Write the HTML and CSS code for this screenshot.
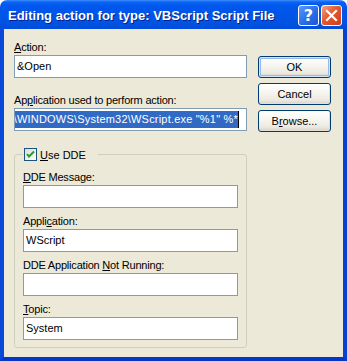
FILE: index.html
```html
<!DOCTYPE html>
<html lang="en">
<head>
    <meta charset="UTF-8">
    <title>Editing action for type: VBScript Script File</title>
    <link rel="stylesheet" href="styles.css">
</head>
<body>
    <div class="window">
        <!-- Title bar -->
        <div class="titlebar">
            <span class="title">Editing action for type: VBScript Script File</span>
            <div class="caption-buttons">
                <span class="cap-btn cap-help">?</span>
                <span class="cap-btn cap-close">
                    <svg viewBox="0 0 19 19" width="19" height="19">
                        <path d="M5 5 L14 14 M14 5 L5 14" stroke="#fff" stroke-width="2.2" stroke-linecap="square"></path>
                    </svg>
                </span>
            </div>
        </div>

        <!-- Dialog body -->
        <div class="frame">
            <div class="main-col">
                <div class="field">
                    <div class="label"><u>A</u>ction:</div>
                    <div class="edit">&amp;Open</div>
                </div>
                <div class="field">
                    <div class="label">Ap<u>p</u>lication used to perform action:</div>
                    <div class="edit edit-path"><span class="sel">\WINDOWS\System32\WScript.exe "%1" %*</span><span class="caret"></span></div>
                </div>

                <fieldset class="group">
                    <legend class="group-title">
                        <span class="check">
                            <svg viewBox="0 0 11 11" width="11" height="11">
                                <path d="M2 5 L4 7.5 L9 2.5" fill="none" stroke="#21A121" stroke-width="2"></path>
                            </svg>
                        </span>
                        <span><u>U</u>se DDE</span>
                    </legend>
                    <div class="gfield">
                        <div class="label"><u>D</u>DE Message:</div>
                        <div class="edit"></div>
                    </div>
                    <div class="gfield">
                        <div class="label">Appli<u>c</u>ation:</div>
                        <div class="edit">WScript</div>
                    </div>
                    <div class="gfield">
                        <div class="label">DDE Application <u>N</u>ot Running:</div>
                        <div class="edit"></div>
                    </div>
                    <div class="gfield">
                        <div class="label"><u>T</u>opic:</div>
                        <div class="edit">System</div>
                    </div>
                </fieldset>
            </div>

            <div class="buttons">
                <button class="btn btn-default">OK</button>
                <button class="btn">Cancel</button>
                <button class="btn">B<u>r</u>owse...</button>
            </div>
        </div>
    </div>
</body>
</html>
```

FILE: styles.css
```css
* {
    margin: 0;
    padding: 0;
    box-sizing: border-box;
}

body {
    font-family: "Liberation Sans", Arial, sans-serif;
    font-size: 11px;
    color: #000;
    background: #fff;
}

u {
    text-decoration: underline;
    text-underline-offset: 1px;
}

.window {
    width: 347px;
    height: 361px;
    display: flex;
    flex-direction: column;
}

/* Title bar */
.titlebar {
    height: 29px;
    flex: none;
    display: flex;
    align-items: center;
    padding: 2px 5px 0 8px;
    border-radius: 7px 7px 0 0;
    background: linear-gradient(#3d8ffd 0, #0d63f2 2px, #0058ee 5px, #0055e8 14px, #0053e4 22px, #004cd8 29px);
}

.title {
    flex: 1;
    color: #fff;
    font-family: "Liberation Sans", Arial, sans-serif;
    font-weight: bold;
    font-size: 13px;
    white-space: nowrap;
    text-shadow: 1px 1px #0a1d8c;
}

.caption-buttons {
    display: flex;
    gap: 2px;
}

.cap-btn {
    width: 21px;
    height: 21px;
    border: 1px solid #fff;
    border-radius: 3px;
    display: flex;
    align-items: center;
    justify-content: center;
}

.cap-help {
    background: linear-gradient(135deg, #5c98fb, #2a6ee8 55%, #1c55d8);
    color: #fff;
    font-family: "DejaVu Sans", sans-serif;
    font-weight: bold;
    font-size: 16px;
}

.cap-close {
    background: linear-gradient(135deg, #f0a58a, #e2582f 45%, #c8401e);
}

/* Body */
.frame {
    flex: 1;
    display: flex;
    background: #ece9d8;
    border: 4px solid #0a48da;
    border-top: 0;
    border-bottom-color: #0536c6;
    border-right-color: #0740d2;
    padding: 12px 12px 9px 10px;
}

.main-col {
    width: 233px;
    display: flex;
    flex-direction: column;
}

.label {
    height: 13px;
    line-height: 13px;
    white-space: nowrap;
    letter-spacing: -0.2px;
}

.edit {
    height: 23px;
    margin-top: 1px;
    border: 1px solid #7f9db9;
    background: #fff;
    padding: 0 2px;
    line-height: 21px;
    white-space: nowrap;
    overflow: hidden;
}

.field + .field {
    margin-top: 16px;
}

.edit-path {
    display: flex;
    justify-content: flex-end;
    padding: 0 7px 0 1px;
}

.sel {
    background: #316ac5;
    color: #fff;
    flex: none;
    height: 17px;
    line-height: 17px;
    margin-top: 2px;
    letter-spacing: 0.2px;
}

.caret {
    width: 1px;
    height: 17px;
    margin-top: 2px;
    background: #000;
    flex: none;
}

/* Group box */
.group {
    flex: 1;
    margin-top: 17px;
    border: 1px solid #d0d0bf;
    border-radius: 3px;
    padding: 0 8px 7px 8px;
    min-width: 0;
}

.group-title {
    display: flex;
    align-items: center;
    gap: 3px;
    height: 13px;
    padding: 0 12px 0 1px;
}

.check {
    width: 13px;
    height: 13px;
    border: 1px solid #1c5180;
    background: linear-gradient(135deg, #dcdcd7, #fff);
    display: flex;
    align-items: center;
    justify-content: center;
}

.gfield:first-of-type {
    margin-top: 10px;
}

.gfield + .gfield {
    margin-top: 7px;
}

/* Buttons */
.buttons {
    display: flex;
    flex-direction: column;
    gap: 5px;
    margin-left: 11px;
    padding-top: 15px;
}

.btn {
    width: 73px;
    height: 22px;
    border: 1px solid #003c74;
    border-radius: 3px;
    background: linear-gradient(#fff, #f7f6f0 40%, #ece9e0 80%, #d8d3c8);
    font-family: "Liberation Sans", Arial, sans-serif;
    font-size: 11px;
    color: #000;
    box-shadow: inset -1px -1px 0 #e3e0d3;
}

.btn-default {
    box-shadow: inset 0 0 0 1px #cee7ff, inset 0 0 0 2px #98b8ea;
}
```
